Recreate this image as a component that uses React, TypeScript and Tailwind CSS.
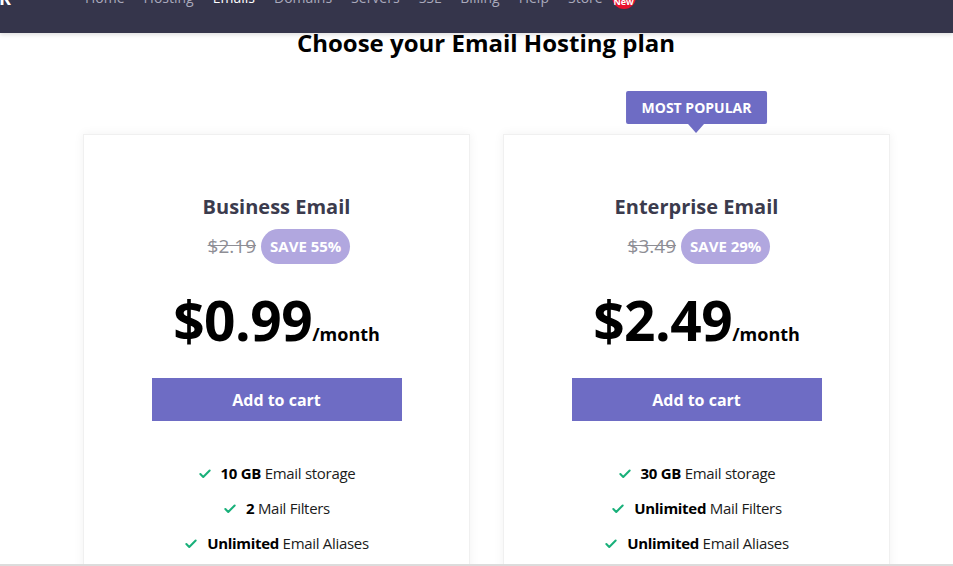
import { Check } from "lucide-react";

interface Plan {
  name: string;
  oldPrice: string;
  save: string;
  price: string;
  popular?: boolean;
  features: { strong: string; rest: string }[];
}

const plans: Plan[] = [
  {
    name: "Business Email",
    oldPrice: "$2.19",
    save: "SAVE 55%",
    price: "$0.99",
    features: [
      { strong: "10 GB", rest: "Email storage" },
      { strong: "2", rest: "Mail Filters" },
      { strong: "Unlimited", rest: "Email Aliases" },
    ],
  },
  {
    name: "Enterprise Email",
    oldPrice: "$3.49",
    save: "SAVE 29%",
    price: "$2.49",
    popular: true,
    features: [
      { strong: "30 GB", rest: "Email storage" },
      { strong: "Unlimited", rest: "Mail Filters" },
      { strong: "Unlimited", rest: "Email Aliases" },
    ],
  },
];

const navLinks = ["Home", "Hosting", "Emails", "Domains", "Servers", "SSL", "Billing", "Help", "Store"];

function Navbar() {
  return (
    <div className="relative z-10 h-[33px] shrink-0 overflow-hidden bg-[#35354b] shadow-[0_2px_4px_rgba(0,0,0,0.12)]">
      <div className="-mt-[12px] flex items-start leading-[20px]">
        {/* Logo, mostly scrolled off */}
        <span className="-ml-[11px] w-[96px] text-[18px] font-bold text-white">EK</span>
        <nav className="flex items-start gap-[19px] text-[14px] text-[#a9a9bb]">
          {navLinks.map((link) => (
            <span key={link} className={link === "Emails" ? "text-white" : ""}>
              {link}
            </span>
          ))}
        </nav>
        <span className="-mt-[3px] ml-[9px] flex h-[24px] w-[24px] items-end justify-center rounded-full bg-[#e8112d] pb-[3px] text-[9px] leading-none font-bold text-white">
          New
        </span>
      </div>
    </div>
  );
}

function PlanCard({ plan }: { plan: Plan }) {
  return (
    <div className="relative w-[387px] shrink-0">
      {/* Most popular tag */}
      {plan.popular && (
        <div className="absolute -top-[43px] left-1/2 -translate-x-1/2">
          <div className="rounded-[2px] bg-[#6e6cc4] px-[16px] py-[7px] text-[14px] leading-[19px] font-bold whitespace-nowrap text-white">
            MOST POPULAR
          </div>
          <div className="mx-auto h-0 w-0 border-x-[8px] border-t-[9px] border-x-transparent border-t-[#6e6cc4]" />
        </div>
      )}

      <div className="flex h-[460px] flex-col items-center border border-[#f0f0f0] bg-white pt-[58px] shadow-[0_0_10px_rgba(0,0,0,0.06)]">
        <h3 className="text-[20px] leading-[28px] font-bold text-[#3b3b4d]">{plan.name}</h3>

        <div className="mt-[8px] flex items-center gap-[5px] pl-[5px]">
          <span className="text-[19px] text-[#8e8e95] line-through">{plan.oldPrice}</span>
          <span className="flex h-[35px] items-center rounded-full bg-[#b1a7df] px-[9px] text-[15px] font-bold text-white">
            {plan.save}
          </span>
        </div>

        <div className="mt-[28px] flex items-baseline">
          <span className="text-[55px] leading-none font-bold tracking-[-0.5px] text-black">{plan.price}</span>
          <span className="text-[18px] leading-none font-bold text-black">/month</span>
        </div>

        <button className="mt-[31px] h-[43px] w-[250px] bg-[#6e6cc4] text-[16px] font-bold text-white">
          Add to cart
        </button>

        <ul className="mt-[35px] flex flex-col items-center text-[15px] leading-[35px] tracking-[-0.3px] text-[#1b1b1b]">
          {plan.features.map((f, i) => (
            <li key={i} className="flex items-center gap-[9px]">
              <Check className="h-[14px] w-[14px] text-[#19b07a]" strokeWidth={3.5} />
              <span>
                <b className="font-bold text-black">{f.strong}</b> {f.rest}
              </span>
            </li>
          ))}
        </ul>
      </div>
    </div>
  );
}

export default function App() {
  return (
    <div className="flex h-[566px] flex-col overflow-hidden bg-white font-['Open_Sans',sans-serif]">
      <Navbar />

      <main className="flex-1 overflow-hidden pl-[83px]">
        <div className="w-[806px]">
          <h2 className="mt-[-5px] text-center text-[24px] leading-[30px] font-bold text-black">
            Choose your Email Hosting plan
          </h2>
          <div className="mt-[76px] flex gap-[33px]">
            {plans.map((plan) => (
              <PlanCard key={plan.name} plan={plan} />
            ))}
          </div>
        </div>
      </main>

      {/* Bottom edge */}
      <div className="h-[2px] shrink-0 bg-[#dcdcdc]" />
    </div>
  );
}
